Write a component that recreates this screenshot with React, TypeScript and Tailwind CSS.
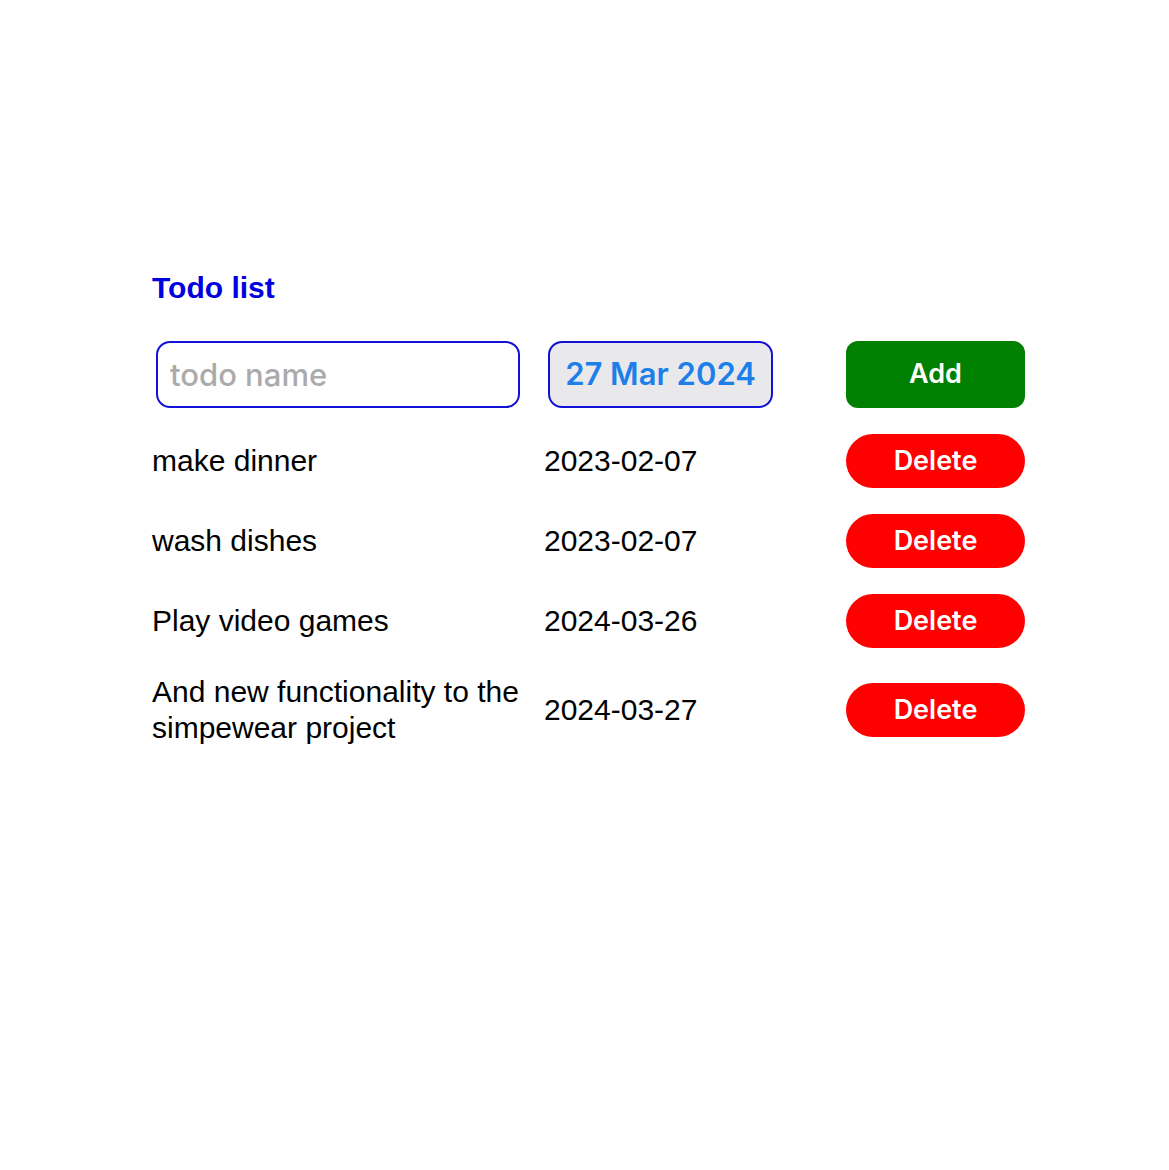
const todos = [
  { name: "make dinner", date: "2023-02-07" },
  { name: "wash dishes", date: "2023-02-07" },
  { name: "Play video games", date: "2024-03-26" },
  { name: "And new functionality to the simpewear project", date: "2024-03-27" },
];

const App = () => {
  return (
    <div className="min-h-[1170px] bg-white pl-[152px] pt-[271px] font-['Liberation_Sans',Arial,sans-serif] text-black">
      {/* Title */}
      <h1 className="text-[30px] font-bold leading-[33px] text-[#0000e0]">Todo list</h1>

      <div className="mt-[37px] grid w-[873px] grid-cols-[392px_302px_179px] items-center gap-y-[26px]">
        {/* New todo row */}
        <div className="pl-[4px]">
          <input
            placeholder="todo name"
            className="h-[67px] w-[364px] rounded-[14px] border-2 border-[#1212d6] bg-white px-[12px] font-['Inter',sans-serif] text-[31px] font-medium text-black outline-none placeholder:text-[#ababab]"
          />
        </div>
        <div className="pl-[4px]">
          <div className="flex h-[67px] w-[225px] items-center justify-center rounded-[14px] border-2 border-[#1212d6] bg-[#e9e9eb] font-['Inter',sans-serif] text-[31px] font-semibold text-[#1d7fe9]">
            27 Mar 2024
          </div>
        </div>
        <button className="flex h-[67px] w-[179px] items-center justify-center rounded-[12px] bg-[#008000] font-['Inter',sans-serif] text-[27px] font-semibold text-white">
          Add
        </button>

        {/* Todo rows */}
        {todos.map((todo) => (
          <div key={todo.name} className="contents">
            <div className="pr-[20px] text-[30px] leading-[36px]">{todo.name}</div>
            <div className="text-[30px] leading-[36px]">{todo.date}</div>
            <button className="flex h-[54px] w-[179px] items-center justify-center rounded-full bg-[#ff0000] font-['Inter',sans-serif] text-[27px] font-semibold text-white">
              Delete
            </button>
          </div>
        ))}
      </div>
    </div>
  );
};

export default App;
